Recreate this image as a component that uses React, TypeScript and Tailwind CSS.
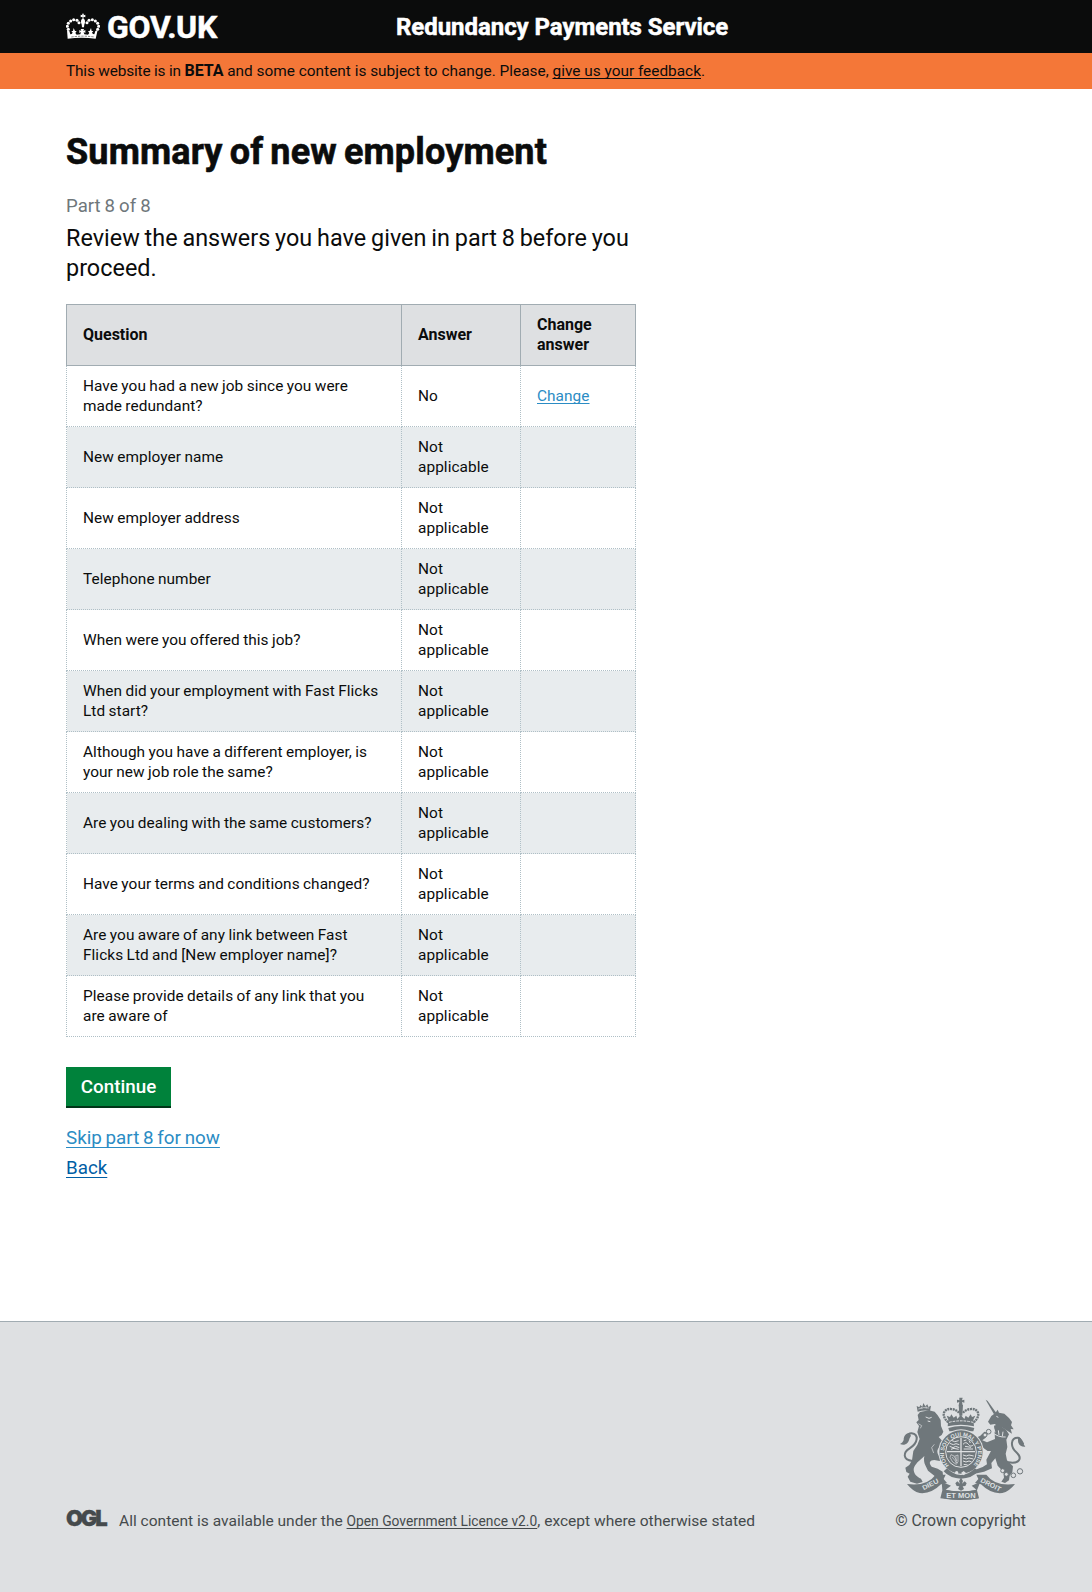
const rows: [string, string, boolean][] = [
  ["Have you had a new job since you were made redundant?", "No", true],
  ["New employer name", "Not applicable", false],
  ["New employer address", "Not applicable", false],
  ["Telephone number", "Not applicable", false],
  ["When were you offered this job?", "Not applicable", false],
  ["When did your employment with Fast Flicks Ltd start?", "Not applicable", false],
  ["Although you have a different employer, is your new job role the same?", "Not applicable", false],
  ["Are you dealing with the same customers?", "Not applicable", false],
  ["Have your terms and conditions changed?", "Not applicable", false],
  ["Are you aware of any link between Fast Flicks Ltd and [New employer name]?", "Not applicable", false],
  ["Please provide details of any link that you are aware of", "Not applicable", false],
];

function HeaderCrown() {
  const dots: [number, number][] = [
    [57, 86], [54, 77], [57, 68], [64, 61], [73, 57], [83, 59], [89, 66],
    [145, 86], [148, 77], [145, 68], [138, 61], [129, 57], [119, 59], [113, 66],
  ];
  return (
    <svg className="-mt-px h-[27px] w-[34px] shrink-0" viewBox="50 37 102 81" fill="#fff">
      {dots.map(([x, y]) => (
        <circle key={`${x}-${y}`} cx={x} cy={y} r="4.6" />
      ))}
      <path d="M98 39h6l-1.5 5 5.500-1.500v7l-5.500-1.500v7h-3v-7l-5.500 1.500v-7l5.500 1.500z" />
      <ellipse cx="101" cy="63" rx="6" ry="8.500" />
      <path d="M97 70h8l-1 10h-6z" />
      <path d="M53 88l7 3 3 10 4-1 3-4-4-5h5l2-9 4 9h5l-4 6 4 5 11-1 2-7-5 3v-9l6 3-2-6h10l-2 6 6-3v9l-5-3 2 7 11 1 4-5-4-6h5l4-9 2 9h5l-4 5 3 4 4 1 3-10 7-3-6 26q-42-6-84 0z" />
      <path d="M66 109q35-5 70 0" stroke="#0b0c0c" strokeWidth="1.500" strokeDasharray="7 3" fill="none" />
    </svg>
  );
}

function Crest() {
  const bg = "#dee0e2";
  return (
    <svg className="h-[104px] w-[127px]" viewBox="60 48 381 312" fill="#6f777b">
      <g fill="none" stroke="#6f777b" strokeLinecap="round">
        <path d="M100 240C70 236 72 214 92 202C118 186 120 160 98 157C86 156 84 164 80 172" strokeWidth="6" />
        <path d="M388 244C420 250 432 232 412 214C392 196 396 170 416 170C424 171 428 180 432 188" strokeWidth="6" />
      </g>
      <path d="M92 156c-14 1-18 12-18 21-2 6-6 9-11 12 8 4 16 3 21-2 8-7 6-16 12-22z" />
      <path d="M418 167c10 4 10 13 14 20l7 10c-10 1-18-4-21-12-2-6 0-12-2-16z" />

      <path d="M116 102l7-9 27-5 17 4 9 11 9 14 1 18 7 17-5 10-9 6 12 13 6 12-8 10-10-2c-8 9-3 22 8 31l-5 8-16-3c-14 1-18 8-8 20l18 6 15 9 1 12-25 1-20-16-8-16c-4-8-5-18-3-28-14 14-28 22-32 39 0 14 9 24 22 29l5 10-17 5-20-6-8-15 6-9-10-5-3-13 12-8 8-14 4-28 12-18 7-18-7-21 5-18-8-11 7-7z" />
      <path d="M140 108l10 4 8-3M146 120l8 2" fill="none" stroke={bg} strokeWidth="3" />
      <path d="M118 128l10 6-4 8M166 190l-8 10 6 16" fill="none" stroke={bg} strokeWidth="2" />
      <path d="M116 92l-3-17 8 4 3-7 6 5 3-11 6 10 6-6 3 8 8-4-3 16q-18-4-37 2z" />
      <path d="M118 84q16-7 32-3M126 78l3 5M141 76l1 6" stroke={bg} strokeWidth="2" fill="none" />

      <path d="M320 56l6 4 26 36-7 4z" />
      <path d="M327 122l10-17 12-9 7-10 4 9 16 3 14 13 9 12-3 10 8 12-9-1 4 14-13-8-15-10-12-2-12-9-13 2z" />
      <path d="M345 134l12-4 24 16 9 14-8 16 3 22-5 20 4 20 18 18-2 18-8 10-2 14-12 8-11-4 8-12-2-18-17-18-7-22-12 14 2 16-24 10-28 6 2-12 22-8 13-8-2-14 14-26-10 0-20-14-16-2-8-14 10-10 12-6 12-12 12 4-8 14-10 8 14 6 24-10-1-16z" />
      <path d="M336 152q22 18 44 16M344 142l4 12M358 148l2 14M372 152l-2 14" fill="none" stroke={bg} strokeWidth="3" />
      <path d="M352 106l6 3" fill="none" stroke={bg} strokeWidth="3" />
      <g fill="none" stroke="#6f777b" strokeWidth="3">
        <circle cx="329" cy="152" r="7" fill={bg} />
        <circle cx="318" cy="162" r="6" fill={bg} />
        <circle cx="371" cy="269" r="6" fill={bg} />
        <circle cx="382" cy="280" r="6" fill={bg} />
        <circle cx="403" cy="283" r="7" />
        <circle cx="423" cy="271" r="8" />
      </g>

      <path d="M241 50h10l-2 8 7-2v9l-7-2 2 10h-12l2-10-7 2v-9l7 2z" />
      <path d="M208 124C184 104 194 82 216 84q16 1 24 12M284 124C308 104 298 82 276 84q-16 1-24 12" fill="none" stroke="#6f777b" strokeWidth="7" strokeDasharray="6 2" />
      <path d="M239 72h13l-2 32h-9z" />
      <path d="M208 116l-5-12 10 4 4-8 7 10 8-6 3 10 10-12 11 12 4-10 8 6 7-10 4 8 10-4-6 12 2 20q-39-9-79 0z" />
      <path d="M210 124q36-9 72 0" fill="none" stroke={bg} strokeWidth="3" strokeDasharray="8 3" />
      <path d="M208 141q38-12 78 0l-3 10h-72z" />

      <circle cx="246" cy="213" r="68" fill={bg} />
      <circle cx="246" cy="213" r="65" />
      <circle cx="246" cy="213" r="46" fill="none" stroke={bg} strokeWidth="3" />
      <defs>
        <path id="garter" d="M210 253A51 51 0 1 1 282 253" />
      </defs>
      <text fill={bg} fontFamily="Liberation Sans" fontWeight="700" fontSize="17" textLength="238" lengthAdjust="spacingAndGlyphs">
        <textPath href="#garter">HONI SOIT QUI MAL Y PENSE</textPath>
      </text>
      <g stroke={bg} fill="none" strokeWidth="3">
        <path d="M246 170v86M204 212h84" strokeWidth="4" />
        <path d="M212 187l11 4 8-3 10 3M212 196l10 4 8-4 11 4M217 178l10 4 12-3M216 205l9-3 14 3" />
        <path d="M254 179l8-2M252 190q9-10 16 0t16 1M254 204h28M258 196l18 3M270 178l4 8" />
        <path d="M252 222l10 3 8-3 14 3M252 231l10 3 8-3 13 3M252 240l9 3 9-3 8 3M254 250l12 2" />
        <path d="M216 221l-3 8 8 14 11 7 5-8V222q-10 8-21-1M219 228l15 18M225 226l9 14M231 226v20" strokeWidth="2" />
      </g>
      <path d="M204 262q20 20 42 20t42-20l10 9q-20 22-52 22t-52-22z" />
      <circle cx="233" cy="275" r="5" fill={bg} />
      <path d="M246 276l8-6 7 6-7 7z" fill={bg} />

      <path d="M84 309q60 8 86-28l30 0-6 13 10 12-18 4q-30 30-64 26-20-4-38-27z" />
      <path d="M408 309q-60 8-86-28l-30 0 6 13-10 12 18 4q30 30 64 26 20-4 38-27z" />
      <path d="M188 302l28 12-16 12q46 9 92 0l-14-12 26-12-10 26 6 24q-56 10-116 0l6-24z" />
      <path d="M213 293q33 10 66 0l-10 20 10 14q-33 7-66 0l10-14z" fill={bg} />
      <path d="M200 328q46 8 92 0l6 24q-52 10-104 0z" />
      <path d="M246 290l6 10-3 8 8-7 6 6-4 8-8 1 4 8-9 5-9-5 4-8-8-1-4-8 6-6 8 7-3-8z" />
      <g fill={bg} fontFamily="Liberation Sans" fontWeight="700">
        <text x="134" y="328" fontSize="20" transform="rotate(-27 134 328)" textLength="52" lengthAdjust="spacingAndGlyphs">DIEU</text>
        <text x="303" y="302" fontSize="20" transform="rotate(27 303 302)" textLength="66" lengthAdjust="spacingAndGlyphs">DROIT</text>
        <text x="202" y="351" fontSize="22" textLength="88" lengthAdjust="spacingAndGlyphs">ET MON</text>
      </g>
    </svg>
  );
}

export default function App() {
  return (
    <div className="flex h-[1592px] w-[1092px] flex-col bg-white font-['Roboto','Liberation_Sans',sans-serif] text-[#0b0c0c]">
      <header className="flex h-[53px] shrink-0 items-center bg-[#0b0c0c] pl-[66px] text-white">
        <HeaderCrown />
        <span className="ml-[7px] w-[289px] text-[32px] leading-[40px] font-bold tracking-[-0.3px] [-webkit-text-stroke:0.5px_#fff]">GOV.UK</span>
        <span className="text-[24px] leading-[30px] font-bold tracking-[-0.05px] [-webkit-text-stroke:0.5px_#fff]">Redundancy Payments Service</span>
      </header>
      <div className="h-9 shrink-0 bg-[#f47738] pl-[66px] text-[15.4px] leading-9 whitespace-pre">
        <span className="tracking-[-0.17px]">This website is in </span>
        <b className="text-[16px] tracking-[-0.1px]">BETA</b> and some content is subject to change. Please,{" "}
        <a className="underline decoration-1 underline-offset-2 [text-decoration-skip-ink:none]">give us your feedback</a>.
      </div>

      <main className="w-[636px] grow pl-[66px]">
        <h1 className="mt-[43px] text-[36px] leading-[40px] font-bold tracking-[0.15px] [word-spacing:-2px] [-webkit-text-stroke:0.6px_#0b0c0c]">Summary of new employment</h1>
        <p className="mt-[22px] text-[18.6px] leading-[25px] text-[#6f777b] [word-spacing:-0.6px]">Part 8 of 8</p>
        <p className="mt-1 text-[23.4px] leading-[30px] tracking-[0.02px] [word-spacing:-1px]">
          Review the answers you have given in part 8 before you proceed.
        </p>
        <table className="mt-[21px] w-[569px] table-fixed border-collapse text-left leading-5">
          <colgroup>
            <col className="w-[335px]" />
            <col className="w-[119px]" />
            <col className="w-[115px]" />
          </colgroup>
          <thead>
            <tr className="h-[61px] bg-[#dee0e2] text-[16px] font-bold">
              {["Question", "Answer", "Change answer"].map((h) => (
                <th key={h} className="border border-[#a1acb2] px-4 py-[10px]">{h}</th>
              ))}
            </tr>
          </thead>
          <tbody className="text-[15.4px] tracking-[0.06px] [word-spacing:-0.5px]">
            {rows.map(([q, a, change]) => (
              <tr key={q} className="h-[61px] even:bg-[#e8ecee]">
                <td className="border border-dotted border-[#afbfc6] px-4 py-[10px]">{q}</td>
                <td className="border border-dotted border-[#afbfc6] px-4 py-[10px]">{a}</td>
                <td className="border border-dotted border-[#afbfc6] px-4 py-[10px]">
                  {change && <a className="text-[#2b8cc4] underline decoration-1 underline-offset-2 [text-decoration-skip-ink:none]">Change</a>}
                </td>
              </tr>
            ))}
          </tbody>
        </table>
        <button className="mt-[30px] block h-[41px] w-[105px] border-b-2 border-[#003618] bg-[#00823b] pt-px text-[18.8px] leading-[39px] font-medium text-white">Continue</button>
        <div className="mt-[15px] flex flex-col items-start text-[18.8px] leading-[30px] [word-spacing:-0.9px]">
          <a className="text-[#2b8cc4] underline decoration-1 underline-offset-[3px] [text-decoration-skip-ink:none]">Skip part 8 for now</a>
          <a className="text-[#005ea5] underline decoration-1 underline-offset-[3px] [text-decoration-skip-ink:none]">Back</a>
        </div>
      </main>

      <footer className="flex h-[271px] shrink-0 items-end justify-between border-t border-[#a1acb2] bg-[#dee0e2] pr-[66px] pb-[61px] pl-[66px] text-[15.55px] leading-5 text-[#454a4c]">
        <div className="flex items-end">
          <span className="mb-px w-[43px] font-['Inter'] text-[22px] leading-6 font-black tracking-[-2.2px] [-webkit-text-stroke:0.3px_#454a4c]">OGL</span>
          <p className="ml-[10px] whitespace-pre">
            All content is available under the{" "}
            <a className="text-[13.8px] underline decoration-1 underline-offset-2 [text-decoration-skip-ink:none]">Open Government Licence v2.0</a>, except where otherwise stated
          </p>
        </div>
        <div className="flex flex-col items-end">
          <Crest />
          <p className="mt-[10px] text-[15.8px]">© Crown copyright</p>
        </div>
      </footer>
    </div>
  );
}
